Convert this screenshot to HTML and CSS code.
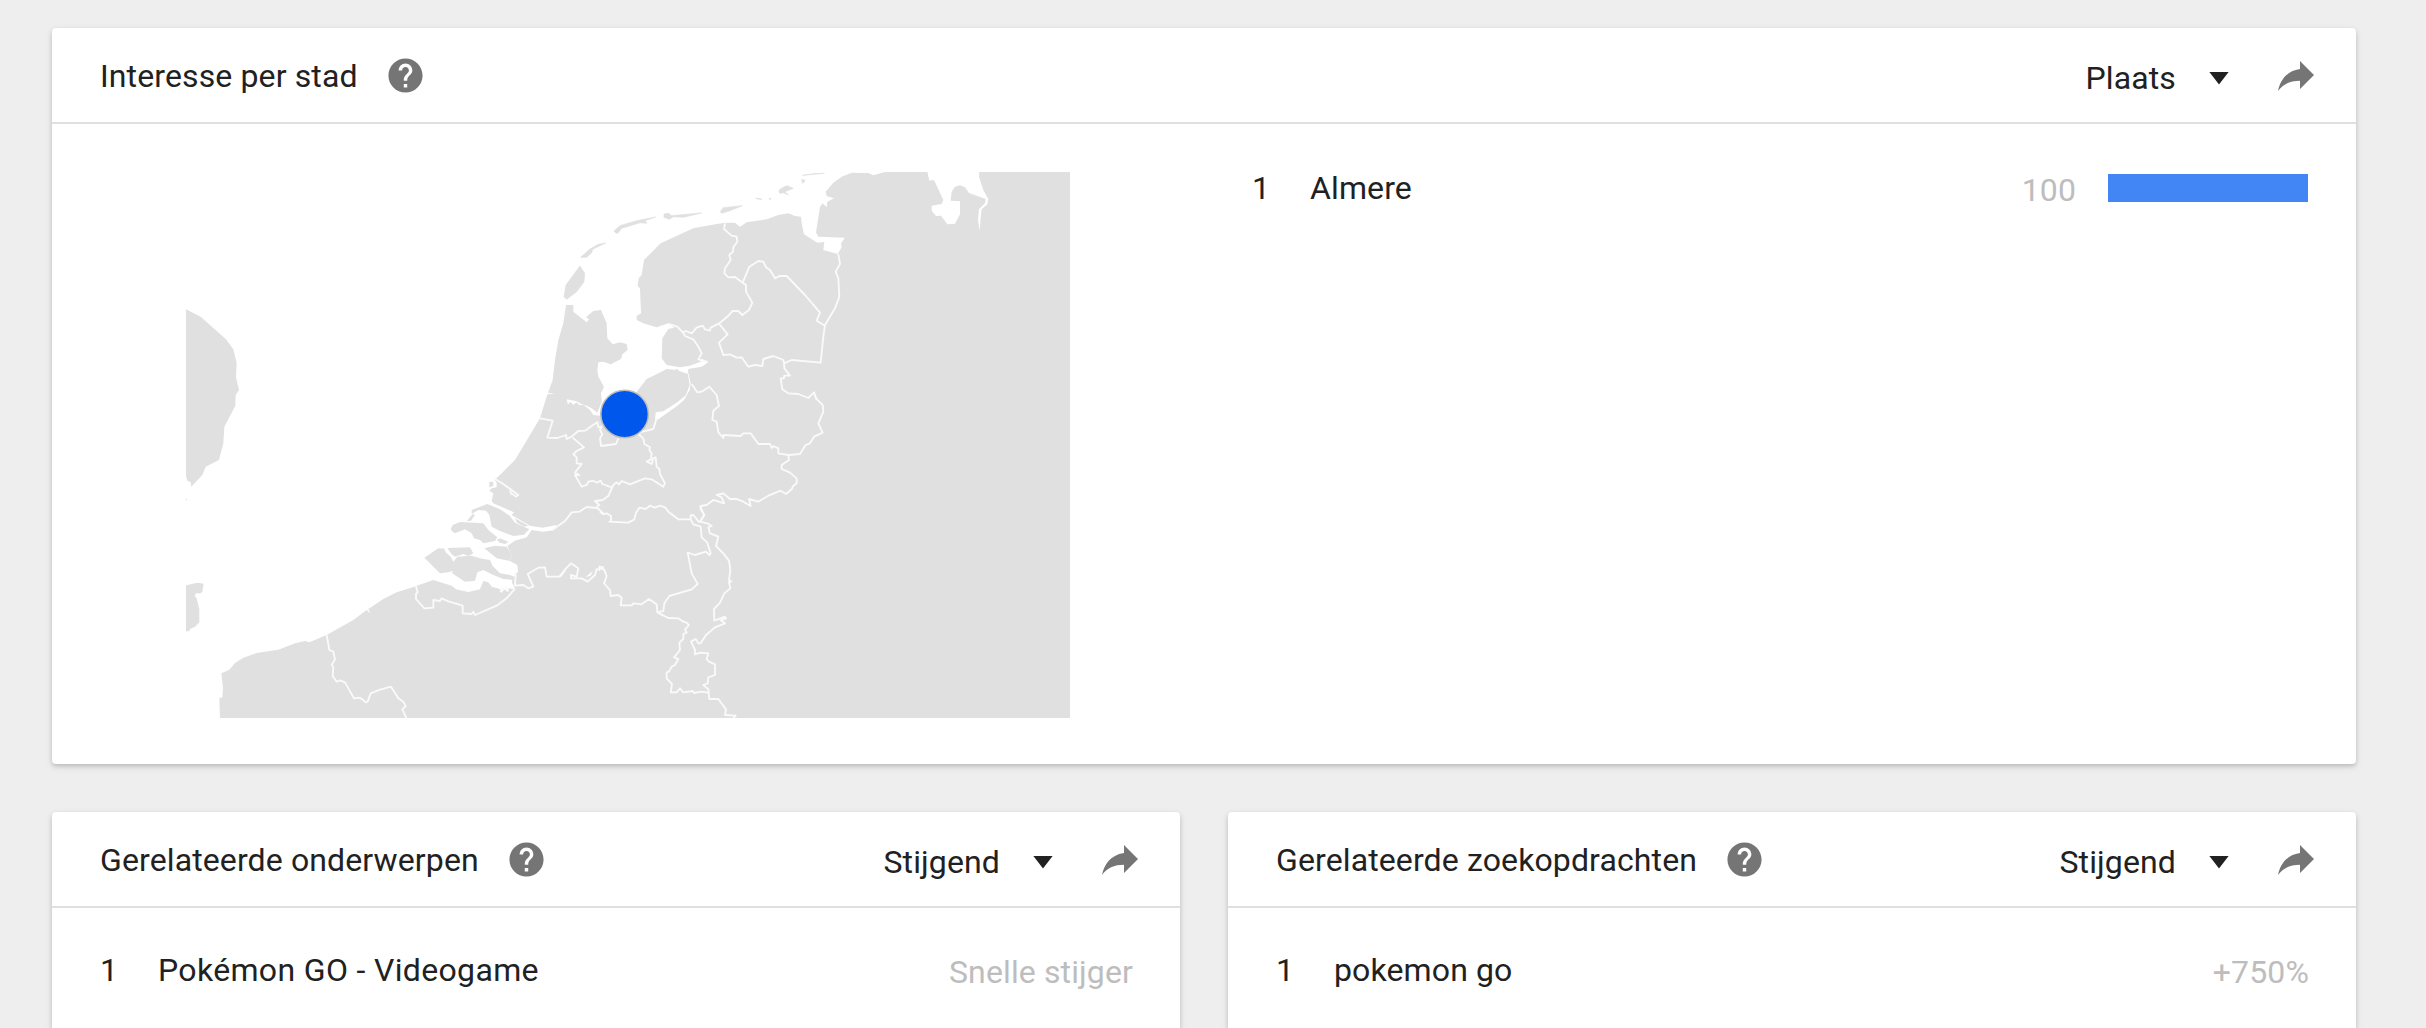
FILE: index.html
```html
<!DOCTYPE html>
<html lang="nl">
<head>
<meta charset="utf-8">
<title>Interesse per stad</title>
<link rel="stylesheet" href="styles.css">
</head>
<body>
<svg class="defs" width="0" height="0" aria-hidden="true">
  <symbol id="help" viewBox="0 0 24 24"><path d="M12 2C6.48 2 2 6.48 2 12s4.48 10 10 10 10-4.480 10-10S17.520 2 12 2zm1 17h-2v-2h2v2zm2.070-7.750l-.9.920C13.450 12.900 13 13.500 13 15h-2v-.5c0-1.100.45-2.100 1.170-2.830l1.240-1.260c.37-.36.59-.86.59-1.410 0-1.100-.9-2-2-2s-2 .9-2 2H8c0-2.210 1.790-4 4-4s4 1.790 4 4c0 .88-.36 1.680-.93 2.250z"/></symbol>
  <symbol id="share" viewBox="0 0 24 24"><path d="M14 9V5l7 7-7 7v-4.100c-5 0-8.500 1.600-11 5.100 1-5 4-10 11-11z"/></symbol>
</svg>
<main class="page">
  <section class="card card-wide">
    <header class="card-header">
      <h2 class="title">Interesse per stad</h2>
      <svg class="help"><use href="#help"/></svg>
      <div class="select"><span>Plaats</span><i class="caret"></i></div>
      <svg class="share"><use href="#share"/></svg>
    </header>
    <div class="geo">
      <svg class="map" viewBox="186 172 884 546">
        <rect class="land" x="186" y="172" width="884" height="546"/>
        <!-- North Sea, Belgian and French coast -->
        <g transform="translate(200 560) scale(.33333)">
          <path class="sea" d="M-60 480L60 480 58 413 67 413 69 385 64 340 88 329 105 309 130 293 170 279 235 269 285 250 315 243 328 247 380 225 460 180 500 150 512 161 505 147 550 117 590 97 650 78V-800H-60Z"/>
          <path class="border" d="M380 225L388 270 400 275 405 298 395 315 400 322 398 348 410 365 420 361 435 367 462 415 480 413 498 427 503 425 512 400 540 389 573 380 595 415 610 425 617 438 607 448 620 476"/>
        </g>
        <!-- Wadden Sea, IJsselmeer and northern provinces -->
        <g transform="translate(540 160) scale(.33333)">
          <path class="sea" d="M-75 900L0 775 22 703 45 702 24 698 38 660 45 600 55 540 70 490 78 435 100 435 100 455 140 487 147 478 138 472 160 453 183 450 200 490 202 535 218 553 240 547 260 552 263 570 247 583 243 597 212 613 190 605 175 607 172 630 175 650 192 680 183 700 185 720 190 750 250 760 292 693 320 657 345 645 380 627 410 630 443 642 445 627 485 620 505 607 485 596 485 604 450 617 420 622 380 615 365 595 367 535 385 507 403 503 385 490 350 502 310 490 290 480 290 468 303 460 300 385 293 378 296 355 305 345 312 300 362 250 460 205 530 192 555 188 585 188 600 200 620 187 680 178 715 165 745 160 765 168 783 170 785 190 792 223 832 248 853 246 850 270 893 282 905 262 903 250 915 233 835 230 828 217 840 140 848 130 860 142 862 125 882 115 860 108 857 95 880 68 905 50 935 38 965 39 985 39 1000 46 1035 36V-20H-1200V900Z"/>
          <path class="land island" d="M120 318L134 340 132 365 110 395 80 418 72 410 78 375 100 345ZM122 292L150 267 175 253 197 249 158 268 155 278 140 292ZM222 213L240 197 290 182 347 171 315 182 320 190 300 188 245 205 235 218 228 220ZM372 162L385 160 395 167 485 159 430 172 400 170 388 178 372 172ZM541 155L550 143 607 137 570 152 545 160ZM648 114L666 118 650 117ZM716 93L722 86 740 77 760 85 735 95 745 105 730 98 720 100ZM785 58L796 62 788 70ZM788 46L820 41 853 40 820 43ZM688 115h4v3h-4ZM408 628h5v4h-5Z"/>
          <path class="border" d="M555 190L552 207 575 227 590 230 592 245 580 262 579 275 568 285 572 300 555 325 553 340 565 352 585 351 608 368 618 375 618 395 637 428 627 450 607 465 595 453 578 453 560 472 538 490 512 503 510 512 495 508 488 497 470 503 455 520 438 513 428 517 412 500 385 492"/>
          <path class="border" d="M608 368L628 320 655 303 670 305 678 322 690 330 705 355 718 348 740 348 795 405 840 458 830 482 855 497"/>
          <path class="border" d="M895 282L900 312 887 335 895 355 898 410 885 445 855 495 850 530 842 608 755 600 732 610 730 600 700 588 670 597 667 618 645 615 625 620 605 592 590 593 570 583 550 585 537 548 563 523 538 492"/>
          <path class="border" d="M732 610L733 625 750 647 733 647 732 655 722 655 727 688 745 700 775 702 805 714 822 697 830 720"/>
          <path class="border" d="M428 515L435 528 460 538 475 560 485 580 475 598 503 606"/>
        </g>
        <!-- Flevoland, Utrecht, Gelderland and Overijssel -->
        <g transform="translate(540 370) scale(.33333)">
          <path class="sea" d="M80 88L84 104 90 95 100 104 110 97 118 106 130 104 150 120 160 135 180 137 187 90 172 128 155 115 140 107 125 103 110 94ZM443 8L449 45 438 75 412 97 370 124 347 127 345 150 355 148 410 109 432 90 449 60 452 40 445 8Z"/>
          <path class="border" d="M350 145L340 177 298 187"/>
          <path class="border" d="M822 67L828 85 848 105 850 125 835 160 848 188 822 200 810 220 797 225 780 252 745 255 715 250 715 235 700 228 695 234 690 222 655 222 632 190 610 190 602 198 550 195 550 204 535 187 530 155 517 150 520 122 537 108 530 75 508 50 485 65 472 67 455 42"/>
          <path class="border" d="M745 255L747 270 725 285 725 297 750 308 770 325 770 340 760 347 755 358 738 372 722 362 685 377 655 395 627 387 632 408 610 395 590 387 570 387 550 370 530 375 545 382 552 400 520 390 500 405 482 408 482 418 493 435 480 455"/>
          <path class="border" d="M170 410L178 405 165 393 188 390 205 378 220 345 230 337 237 343 245 333 270 343 315 325 335 328 370 350 375 340 360 312 358 297 350 290 347 262 340 265 335 282 320 275 333 268 335 250 328 240 330 232 313 222 310 205 298 195 300 188"/>
          <path class="border" d="M215 352L187 342 182 332 170 338 160 332 145 335 140 345 125 350 105 315 118 315 105 308 125 282 110 280 110 262 100 253 110 243 132 232 98 203"/>
          <path class="border" d="M0 145L38 152 22 203 52 204 78 195 80 207 95 200 115 183 135 182 155 168 172 157 175 172 185 170 180 180 187 193 180 205 183 228 228 222 235 205"/>
        </g>
        <!-- Zeeland delta -->
        <g transform="translate(400 460) scale(.33333)">
          <path class="sea" d="M48 378L100 360 155 377 168 388 205 396 240 388 250 363 265 367 275 380 300 387 305 400 312 388 325 397 326 385 345 388 335 365 345 345 354 335 352 315 330 303 335 285 322 258 345 242 380 232 395 210 430 215 460 211 470 195 428 203 390 197 335 165 342 157 280 130 275 122 280 100 268 92 275 85 290 82 290 68 284 60 300 45 345 0V-20H48Z"/>
          <path class="land" d="M215 150L262 132 300 148 330 168 345 188 388 208 372 224 340 228 300 213 275 200 268 165 258 152 235 150 215 162ZM200 184L218 162 225 165 213 182ZM153 205L158 195 180 186 250 190 265 210 292 232 285 243 250 250 240 240 222 235 215 220 195 208 165 220 155 213ZM142 264L210 262 220 280 205 288 190 282 165 290 155 283ZM73 293L115 265 133 266 138 278 152 290 160 305 172 290 215 287 245 296 270 300 278 318 300 340 330 345 342 350 342 360 310 357 280 345 250 330 232 337 225 362 195 365 172 350 155 338 160 332 145 337 120 340ZM253 265L285 257 320 260 335 283 330 303 290 295ZM290 240L300 235 325 245 315 252 300 248ZM268 65L280 65 280 78 268 82Z"/>
          <path class="land" d="M345 175L385 197 372 200 350 187Z"/>
          <path class="sea" d="M558 350L578 333 572 347 562 350ZM478 350L500 322 497 332 484 350Z"/>
          <path class="border" d="M284 56L310 72 355 105 347 110 335 100M330 92L335 105M458 209L495 183 515 157 538 155 560 141 592 144 612 162"/>
          <path class="border" d="M612 322L598 320 598 330 590 327 585 345 563 365 545 355 513 355 513 345 530 350 535 325 513 310 498 325 478 350 440 350 435 322 415 323 383 342 400 380 385 385 370 375 345 377 347 345 342 340"/>
          <path class="border" d="M345 386L320 415 290 437 225 465 220 455 215 462 188 460 188 437 145 424 125 415 120 423 100 420 100 443 73 445 48 417 48 402 53 397 48 378M302 380L310 392M315 378L322 390M300 395L312 385"/>
        </g>
        <!-- Brabant and Limburg -->
        <g transform="translate(600 460) scale(.33333)">
          <path class="border" d="M300 137L312 165 300 185 322 190 335 198 325 202 330 220 355 230 348 258 370 280 387 302 391 330 387 362 394 364 387 367 391 385 373 400 360 428 342 447 343 482 375 470 378 475 362 481 375 490 345 502 318 525 302 550 295 550 287 537 273 545 285 570 285 583 300 578 325 580 320 597 327 605 345 613 345 645 325 652 323 670 310 675 325 688 328 717 355 717 378 748 375 765 407 767 400 775"/>
          <path class="border" d="M325 698L303 695 282 699 278 693 250 697 240 685 230 697 212 697 216 672 200 655 200 637 207 635 215 620 225 615 235 597 222 592 240 570 238 548 250 537 250 522 260 518 255 508 267 495 258 487 250 485 235 475 205 474 172 457 190 467M172 457L170 433 147 417 125 433 100 430 95 436 62 436 65 413 55 405 32 408 30 390 12 370 20 348 12 328 -2 325"/>
          <path class="border" d="M175 456L190 453 193 430 208 408 275 388 293 372 275 340 263 278 285 285 318 275 328 285 332 280 322 248 305 232 302 200 280 193 272 178 235 178 205 155 195 142 180 137 165 143 150 137 137 147 118 143 108 158 103 178 85 188 28 185 33 182 33 168 20 160 10 163 0 155M272 178L272 166 280 165 298 187"/>
        </g>
        <!-- English coast -->
        <g transform="translate(170 290) scale(.33333)">
          <path class="land" d="M48 58L92 80 168 148 190 178 200 220 198 262 207 300 197 315 196 347 163 410 160 460 147 510 107 530 97 555 64 590 62 577 52 572 48 558ZM48 886L83 878 101 881 97 905 92 910 78 910 74 918 80 925 88 958 88 997 75 1010 60 1017 58 1024 48 1024ZM48 625L52 629 48 632Z"/>
        </g>
        <!-- Bremerhaven and Elbe inlets -->
        <g transform="translate(780 160) scale(.33333)">
          <path class="sea" d="M441 30L448 62 462 60 490 120 485 132 455 137 455 152 468 168 483 167 502 193 525 191 540 163 540 124 512 122 515 95 525 80 540 76 555 82 567 99 617 117 615 130 597 147 594 180 599 213 602 175 605 148 622 133 625 117 610 90 597 50 598 30Z"/>
        </g>
        <circle class="marker" cx="624.600" cy="414" r="23.800"/>
      </svg>
      <div class="list">
        <div class="row">
          <span class="rank">1</span><span class="name">Almere</span><span class="value">100</span><span class="bar"></span>
        </div>
      </div>
    </div>
  </section>
  <div class="columns">
    <section class="card">
      <header class="card-header">
        <h2 class="title">Gerelateerde onderwerpen</h2>
        <svg class="help"><use href="#help"/></svg>
        <div class="select"><span>Stijgend</span><i class="caret"></i></div>
        <svg class="share"><use href="#share"/></svg>
      </header>
      <div class="list">
        <div class="row"><span class="rank">1</span><span class="name topic">Pokémon GO - Videogame</span><span class="value">Snelle stijger</span></div>
      </div>
    </section>
    <section class="card">
      <header class="card-header">
        <h2 class="title">Gerelateerde zoekopdrachten</h2>
        <svg class="help"><use href="#help"/></svg>
        <div class="select"><span>Stijgend</span><i class="caret"></i></div>
        <svg class="share"><use href="#share"/></svg>
      </header>
      <div class="list">
        <div class="row"><span class="rank">1</span><span class="name">pokemon go</span><span class="value">+750%</span></div>
      </div>
    </section>
  </div>
</main>
</body>
</html>
```
FILE: styles.css
```css
* {
  box-sizing: border-box;
}

body {
  margin: 0;
  height: 1028px;
  overflow: hidden;
  background: #eee;
  color: #212121;
  font: 32px/40px Roboto, sans-serif;
  letter-spacing: .12px;
}

.defs {
  display: block;
}

.page {
  display: flex;
  flex-direction: column;
  gap: 48px;
  width: 2304px;
  margin: 28px 0 0 52px;
}

.card {
  flex: 1;
  background: #fff;
  border-radius: 4px 4px 0 0;
  box-shadow: 0 2px 4px rgba(0, 0, 0, .16), 0 3px 8px rgba(0, 0, 0, .08);
}

.card-wide {
  flex: none;
  height: 736px;
  border-radius: 4px;
}

.columns {
  display: flex;
  gap: 48px;
  height: 216px;
}

.card-header {
  display: flex;
  align-items: center;
  height: 96px;
  padding: 0 36px 0 48px;
  border-bottom: 2px solid #e0e0e0;
}

.title {
  margin: 0;
  padding-top: 2px;
  font-size: 32px;
  font-weight: 400;
}

.help {
  width: 41px;
  height: 41px;
  margin-left: 27px;
  fill: #757575;
}

.share {
  width: 48px;
  height: 48px;
  margin-left: 43px;
  fill: #757575;
}

.select {
  display: flex;
  align-items: center;
  gap: 33px;
  margin-left: auto;
  padding-top: 6px;
}

.caret {
  width: 20px;
  height: 13px;
  background: #212121;
  clip-path: polygon(0 0, 100% 0, 50% 100%);
}

.geo {
  display: grid;
  grid-template-columns: 1152px 1152px;
}

.map {
  width: 884px;
  height: 546px;
  margin: 48px 0 0 134px;
}

.land {
  fill: #e0e0e0;
}

.island {
  stroke: #e0e0e0;
  stroke-width: 2;
}

.sea {
  fill: #fff;
}

.border {
  fill: none;
  stroke: #fafafa;
  stroke-width: 5.5;
  stroke-linejoin: round;
}

.marker {
  fill: #0057eb;
  stroke: #bdbdbd;
  stroke-width: 1.5;
}

.list {
  padding: 42px 47px 0 48px;
}

.geo .list {
  padding: 44px 48px 0;
}

.row {
  display: flex;
  align-items: center;
  height: 40px;
}

.rank {
  width: 58px;
}

.topic {
  letter-spacing: .34px;
}

.value {
  margin-left: auto;
  padding-top: 3px;
  color: #bdbdbd;
}

.bar {
  width: 200px;
  height: 28px;
  margin-left: 32px;
  background: #4285f4;
}
```
